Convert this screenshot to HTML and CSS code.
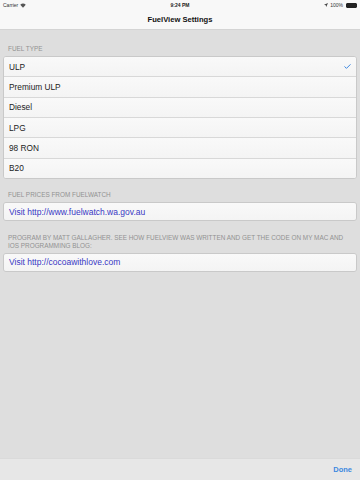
FILE: index.html
```html
<!DOCTYPE html>
<html lang="en">
<head>
    <meta charset="UTF-8">
    <meta name="viewport" content="width=device-width, initial-scale=1.0">
    <title>FuelView Settings</title>
    <link rel="stylesheet" href="styles.css">
</head>
<body>
    <header class="topbar">
        <div class="status">
            <span class="status-left">Carrier
                <svg class="wifi" width="6" height="5" viewBox="0 0 12 10">
                    <path d="M6 9.5 L0.5 3.5 A8 8 0 0 1 11.5 3.5 Z" fill="#555"/>
                </svg>
            </span>
            <span class="status-time">9:24 PM</span>
            <span class="status-right">
                <svg width="4" height="4" viewBox="0 0 10 10">
                    <path d="M10 0 L0 4.5 L4.5 5.5 L5.5 10 Z" fill="#444"/>
                </svg>
                100%
                <span class="battery"><span class="battery-fill"></span></span>
            </span>
        </div>
        <h1 class="title">FuelView Settings</h1>
    </header>

    <main class="content">
        <section class="section first">
            <h2 class="section-label">FUEL TYPE</h2>
            <ul class="group">
                <li class="row">ULP
                    <svg class="check" width="7" height="5" viewBox="0 0 16 12">
                        <path d="M1.5 6.5 L5.5 10.5 L14.5 1.5" fill="none" stroke="#3d87e0" stroke-width="2.4" stroke-linecap="round" stroke-linejoin="round"/>
                    </svg>
                </li>
                <li class="row">Premium ULP</li>
                <li class="row">Diesel</li>
                <li class="row">LPG</li>
                <li class="row">98 RON</li>
                <li class="row">B20</li>
            </ul>
        </section>

        <section class="section">
            <h2 class="section-label">FUEL PRICES FROM FUELWATCH</h2>
            <ul class="group">
                <li class="row link-row"><a href="#">Visit http://www.fuelwatch.wa.gov.au</a></li>
            </ul>
        </section>

        <section class="section">
            <h2 class="section-label">PROGRAM BY MATT GALLAGHER. SEE HOW FUELVIEW WAS WRITTEN AND GET THE CODE ON MY MAC AND IOS PROGRAMMING BLOG:</h2>
            <ul class="group">
                <li class="row link-row"><a href="#">Visit http://cocoawithlove.com</a></li>
            </ul>
        </section>
    </main>

    <footer class="toolbar">
        <button class="done">Done</button>
    </footer>
</body>
</html>
```
FILE: styles.css
```css
body {
    font-family: "Liberation Sans", Arial, sans-serif;
    margin: 0;
    padding: 0;
    width: 360px;
    height: 480px;
    background-color: #dedede;
    color: #1c1c1c;
    display: flex;
    flex-direction: column;
    overflow: hidden;
}
.topbar {
    height: 30px;
    background-color: #f8f8f8;
    border-bottom: 1px solid #d4d4d4;
    box-sizing: border-box;
    display: flex;
    flex-direction: column;
}
.status {
    height: 10px;
    padding: 0 3px;
    display: flex;
    align-items: center;
    justify-content: space-between;
    font-size: 5px;
    color: #333;
}
.status-left, .status-right {
    flex: 1;
    display: flex;
    align-items: center;
    gap: 2px;
}
.status-right {
    justify-content: flex-end;
}
.status-time {
    font-weight: bold;
    color: #222;
}
.battery {
    width: 9px;
    height: 3px;
    border: 0.5px solid #222;
    border-radius: 1px;
    display: inline-flex;
    margin-left: 1px;
}
.battery-fill {
    flex: 1;
    background-color: #222;
}
.title {
    margin: 0;
    flex: 1;
    display: flex;
    align-items: center;
    justify-content: center;
    padding-bottom: 1px;
    font-size: 7.6px;
    font-weight: bold;
    color: #111;
}
.content {
    flex: 1;
    padding: 0 3px;
}
.section {
    padding-top: 12.5px;
}
.section.first {
    padding-top: 15px;
}
.section-label {
    margin: 0 0 3.5px;
    padding: 0 5px;
    font-size: 6.4px;
    line-height: 7.6px;
    font-weight: normal;
    color: #929292;
}
.group {
    list-style: none;
    margin: 0;
    padding: 0;
    background-color: #f7f7f7;
    border: 1px solid #c9c9c9;
    border-radius: 3px;
    overflow: hidden;
}
.row {
    height: 19.3px;
    padding: 0 5px;
    display: flex;
    align-items: center;
    justify-content: space-between;
    font-size: 8.3px;
    border-bottom: 1px solid #d8d8d8;
    background: linear-gradient(#f9f9f9, #f4f4f4);
}
.row:last-child {
    border-bottom: none;
}
.link-row {
    height: 17px;
}
.link-row a {
    color: #3838c4;
    text-decoration: none;
    font-size: 8.5px;
}
.check {
    margin-right: 0;
}
.toolbar {
    height: 22px;
    background-color: #e7e7e7;
    border-top: 1px solid #dadada;
    box-sizing: border-box;
    display: flex;
    align-items: center;
    justify-content: flex-end;
    padding: 0 8px 1px;
}
.done {
    background: none;
    border: none;
    padding: 0;
    font-family: inherit;
    font-size: 7.5px;
    font-weight: bold;
    color: #3d87e0;
}
```
